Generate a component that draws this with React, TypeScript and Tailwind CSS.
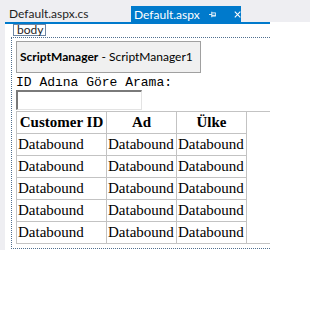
import React from "react";

const rows = [1, 2, 3, 4, 5];

const App: React.FC = () => {
  return (
    <div className="w-[310px] h-[315px] bg-white overflow-hidden">
      {/* tab strip */}
      <div className="h-[22px] bg-[#eeeef2] flex items-end font-['Lato',sans-serif] text-[12px]">
        <div className="w-[131px] h-[16px] pl-[9px] leading-[15px] text-[#1e1e1e] whitespace-nowrap">Default.aspx.cs</div>
        <div className="w-[110px] h-[16px] bg-[#007acc] text-white flex items-center pl-[3px] whitespace-nowrap">
          <span className="leading-[15px]">Default.aspx</span>
          <svg className="ml-[9px]" width="9" height="9" viewBox="0 0 9 9">
            <path d="M0 4.5h3.5M3.5 1v7M3.5 2.5h5v4h-5M3.5 5.5h5" stroke="white" strokeWidth="1.1" fill="none" />
          </svg>
          <svg className="ml-[18px]" width="9" height="9" viewBox="0 0 9 9">
            <path d="M1 1l7 7M8 1l-7 7" stroke="white" strokeWidth="1.4" />
          </svg>
        </div>
      </div>
      <div className="flex">
        <div className="w-[5px] h-[228px] bg-[#eeeef2]" />
        <div className="w-[265px]">
          <div className="h-[2px] bg-[#007acc]" />
          {/* body tag */}
          <div className="ml-[8px] w-[33px] h-[12px] border border-[#6d86a3] font-['Lato',sans-serif] text-[12px] leading-[10px] pl-[3px] text-[#1e1e1e] whitespace-nowrap">
            body
          </div>
          {/* design surface */}
          <div className="ml-[6px] mt-[1px] border-l border-t border-b border-dotted border-[#4f6f8f] pl-[4px] pt-[3px] pb-[4px]">
            <div className="w-[185px] h-[32px] bg-[#f0f0f0] border border-[#a0a0a0] flex items-center pl-[3px] font-['Lato',sans-serif] text-[12px] text-black whitespace-nowrap">
              <span className="font-bold">ScriptManager</span>
              <span>&nbsp;- ScriptManager1</span>
            </div>
            <div className="mt-[2px] font-['Liberation_Mono',monospace] text-[13px] leading-[15px] text-black whitespace-nowrap">
              ID Adına Göre Arama:
            </div>
            <div className="w-[126px] h-[20px] border-t-2 border-l-2 border-b border-r border-t-[#7a7a7a] border-l-[#7a7a7a] border-b-[#e3e3e3] border-r-[#e3e3e3] bg-white" />
            <div className="mt-[1px] border-t border-b border-[#c3c3c3]">
              <table className="border-collapse font-['Liberation_Serif',serif] text-[15px] text-black">
                <thead>
                  <tr className="h-[21px]">
                    <th className="border border-t-0 border-[#c3c3c3] w-[90px] px-[1px] text-center font-bold leading-[18px]">Customer ID</th>
                    <th className="border border-t-0 border-[#c3c3c3] w-[70px] px-[1px] text-center font-bold leading-[18px]">Ad</th>
                    <th className="border border-t-0 border-[#c3c3c3] w-[70px] px-[1px] text-center font-bold leading-[18px]">Ülke</th>
                  </tr>
                </thead>
                <tbody>
                  {rows.map((r, i) => (
                    <tr key={r} className="h-[22px]">
                      <td className={`border border-[#c3c3c3] px-[1px] leading-[18px] ${i === rows.length - 1 ? "border-b-0" : ""}`}>Databound</td>
                      <td className={`border border-[#c3c3c3] px-[1px] leading-[18px] ${i === rows.length - 1 ? "border-b-0" : ""}`}>Databound</td>
                      <td className={`border border-[#c3c3c3] px-[1px] leading-[18px] ${i === rows.length - 1 ? "border-b-0" : ""}`}>Databound</td>
                    </tr>
                  ))}
                </tbody>
              </table>
            </div>
          </div>
        </div>
      </div>
    </div>
  );
};

export default App;
